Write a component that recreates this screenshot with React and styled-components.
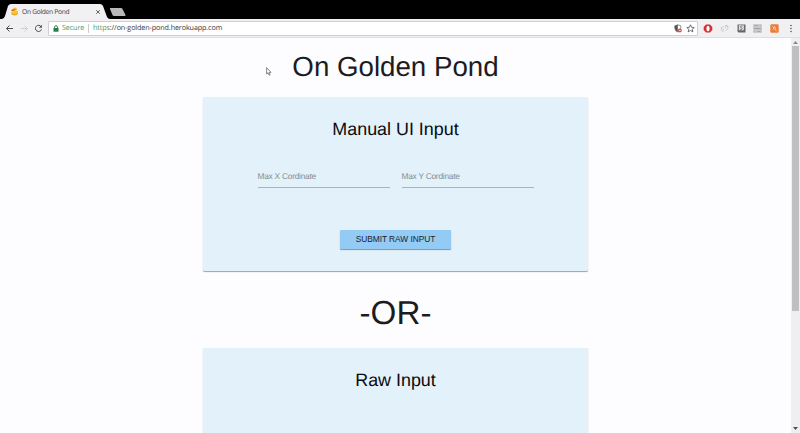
import React from "react";
import styled, { createGlobalStyle } from "styled-components";

const Global = createGlobalStyle`
  * { box-sizing: border-box; }
  body { margin: 0; overflow: hidden; background: #fdfcfe; text-rendering: geometricPrecision; }
  svg { display: block; flex: none; }
`;

const Browser = styled.div`
  width: 800px;
  height: 433px;
  display: flex;
  flex-direction: column;
  overflow: hidden;
  font-family: "Liberation Sans", Arial, sans-serif;
`;

const TabStrip = styled.header`
  position: relative;
  height: 19px;
  flex: none;
  padding-top: 4px;
  background: #000;
`;

const TabShapes = styled.svg`
  position: absolute;
  left: 0;
  top: 0;
`;

const Tab = styled.div`
  position: relative;
  display: flex;
  align-items: center;
  width: 103px;
  height: 15px;
  padding: 0 2px 0 10px;
  font: 6.7px/15px "Open Sans", sans-serif;
  color: #3c3c46;
`;

const TabTitle = styled.span`
  flex: 1;
  margin-left: 3px;
  letter-spacing: -0.3px;
  white-space: nowrap;
`;

const Toolbar = styled.nav`
  display: flex;
  align-items: center;
  height: 19px;
  flex: none;
  padding: 0 6px 0 5px;
  background: #f0eff1;
  border-bottom: 1px solid #dedde0;
`;

const NavIcons = styled.div`
  display: flex;
  width: 43px;
  gap: 5.5px;
`;

const AddressBar = styled.div`
  display: flex;
  align-items: center;
  width: 650px;
  height: 15px;
  padding: 0 2px 0 4px;
  background: #fff;
  border: 1px solid #cfced1;
  border-radius: 1px;
  font: 7.2px/13px "Open Sans", sans-serif;
  letter-spacing: -0.11px;
  white-space: nowrap;
`;

const Secure = styled.span`
  width: 26px;
  margin-left: 3px;
  color: #4b9a68;
`;

const Divider = styled.i`
  width: 1px;
  height: 9px;
  margin-right: 4px;
  background: #cccccf;
`;

const Url = styled.span`
  flex: 1;
  color: #35353a;
`;

const Scheme = styled.span`
  color: #4b9a68;
`;

const AddressActions = styled.div`
  display: flex;
  gap: 4px;
`;

const Extensions = styled.div`
  display: flex;
  align-items: center;
  flex: 1;
  gap: 7.4px;
  padding-left: 5px;
`;

const MenuDots = styled.svg`
  margin-left: auto;
`;

const Viewport = styled.div`
  display: flex;
  flex: 1;
  min-height: 0;
  position: relative;
`;

const Page = styled.main`
  width: 791px;
  height: 395px;
  overflow: hidden;
  display: flex;
  flex-direction: column;
  align-items: center;
  background: #fdfcfe;
  color: #1c1c1e;
`;

const Heading = styled.h1`
  margin: ${(p) => p.$top}px 0 ${(p) => p.$bottom}px;
  height: ${(p) => p.$height}px;
  flex: none;
  font-weight: 400;
  font-size: ${(p) => p.$size}px;
  line-height: ${(p) => p.$height}px;
`;

const Card = styled.section`
  display: flex;
  flex-direction: column;
  align-items: center;
  width: 385px;
  height: 174px;
  flex: none;
  padding-top: 20px;
  background: #e3f1fa;
  border-radius: 1.5px;
  box-shadow: 0 1px 1px rgba(0, 0, 0, 0.36);
`;

const CardTitle = styled.h2`
  margin: 0;
  height: 24px;
  font-weight: 400;
  font-size: 17.9px;
  line-height: 24px;
  color: #0b0b0d;
`;

const Fields = styled.div`
  display: flex;
  gap: 12px;
  margin-top: 28px;
`;

const Field = styled.label`
  width: 132px;
  height: 19px;
  border-bottom: 1px solid #a9b5bd;
  font-size: 8.3px;
  letter-spacing: -0.22px;
  line-height: 14px;
  color: #868e93;
`;

const Submit = styled.button`
  width: 111px;
  height: 19px;
  margin-top: 41.5px;
  padding: 0;
  border: 0;
  border-radius: 1px;
  background: #94cbf5;
  box-shadow: 0 1px 1px rgba(0, 0, 0, 0.4);
  font: 8.4px/18px "Liberation Sans", Arial, sans-serif;
  letter-spacing: -0.06px;
  color: #18232d;
`;

const ScrollTrack = styled.aside`
  display: flex;
  flex-direction: column;
  align-items: center;
  width: 9px;
  padding-top: 3px;
  background: #efeef0;
`;

const ScrollThumb = styled.div`
  width: 7px;
  height: 265px;
  margin: 2px 0 116px;
  background: #bfbec0;
`;

const Pointer = styled.svg`
  position: absolute;
  left: 266px;
  top: 29px;
`;

const Stroke = ({ w = 9, color = "#4d4d50", children }) => (
  <svg width={w} height={w} viewBox="0 0 9 9" fill="none" stroke={color} strokeWidth="1">
    {children}
  </svg>
);

function BrowserTabs() {
  return (
    <TabStrip>
      <TabShapes width="130" height="19">
        <path d="M2 19 Q4 19 5 16 L8 6 Q9 4 11 4 H100 Q102 4 103 6 L107 17 Q108 19 110 19Z" fill="#f1f0f2" />
        <path d="M110 8H121Q122 8 122.500 9L125.500 15Q126 16 124.500 16H114Q113 16 112.500 15L110 9Z" fill="#b9b9b9" />
      </TabShapes>
      <Tab>
        <svg width="9" height="9" viewBox="0 0 9 9">
          <path d="M3.400 1Q6 -.3 7 2Q7 3.500 6 4.300L8 4Q8.500 8.300 4.500 8.300Q1 8.300 1 5L3.600 4Z" fill="#f7c52d" />
          <path d="M1.500 2.800L3.800 2V4H1.500Z" fill="#dc4c2c" />
          <path d="M1.500 7Q5 9.300 7.800 6.500" fill="none" stroke="#d69425" strokeWidth=".7" />
          <circle cx="4.800" cy="2.300" r=".5" fill="#5b4618" />
        </svg>
        <TabTitle>On Golden Pond</TabTitle>
        <svg width="6" height="6" viewBox="0 0 6 6" stroke="#55555a" strokeWidth=".9">
          <path d="M1.200 1.200L4.800 4.800M4.800 1.200L1.200 4.800" />
        </svg>
      </Tab>
    </TabStrip>
  );
}

function BrowserToolbar() {
  return (
    <Toolbar>
      <NavIcons>
        <Stroke><path d="M8 4.500H1.500M4.500 1.500L1.500 4.500L4.500 7.500" /></Stroke>
        <Stroke color="#cfced1"><path d="M1 4.500H7.500M4.500 1.500L7.500 4.500L4.500 7.500" /></Stroke>
        <Stroke>
          <path d="M7.200 2.800A3.100 3.100 0 1 0 7.500 5.300" />
          <path d="M7.900 .8V3.800H4.900Z" fill="#4d4d50" stroke="none" />
        </Stroke>
      </NavIcons>
      <AddressBar>
        <svg width="6" height="7" viewBox="0 0 6 7">
          <rect x=".5" y="3" width="5" height="3.700" fill="#277d48" />
          <path d="M1.600 3V2A1.400 1.400 0 0 1 4.400 2V3" fill="none" stroke="#277d48" strokeWidth=".9" />
        </svg>
        <Secure>Secure</Secure>
        <Divider />
        <Url><Scheme>https</Scheme>://on-golden-pond.herokuapp.com</Url>
        <AddressActions>
          <svg width="8" height="9" viewBox="0 0 8 9">
            <path d="M.8 1.800L3.800 .8L6.800 1.800V4Q6.500 7 3.800 8Q1 7 .8 4Z" fill="#fff" stroke="#666" strokeWidth=".7" />
            <path d="M3.800 .8V8Q1 7 .8 4V1.800Z" fill="#555" />
            <circle cx="5.800" cy="6.500" r="2" fill="#d94645" />
            <path d="M4.800 6.500H6.800" stroke="#fff" strokeWidth=".7" />
          </svg>
          <Stroke>
            <path d="M4.500 .8L5.600 3.300L8.200 3.500L6.200 5.300L6.900 7.900L4.500 6.500L2.100 7.900L2.800 5.300L.8 3.500L3.400 3.300Z" strokeWidth=".8" />
          </Stroke>
        </AddressActions>
      </AddressBar>
      <Extensions>
        <svg width="10" height="9" viewBox="0 0 10 9">
          <path d="M3 .5H7L9.300 3V6L7 8.500H3L.7 6V3Z" fill="#d92e32" />
          <ellipse cx="5" cy="4.500" rx="1.600" ry="2.800" fill="#fff" />
        </svg>
        <Stroke color="#c9c9cb">
          <path d="M3.700 2.500Q1 3 1 5.500Q2 7.500 4 5M5 4Q6 1 8 2Q8.500 5 5.500 7M2 7L3.500 7.500M5 1.500H7" />
        </Stroke>
        <svg width="9" height="9" viewBox="0 0 9 9">
          <path d="M.5 .5H8.500V8.500H1.500L.5 7.500Z" fill="#68686a" />
          <path d="M1.800 1.200H6.800V6.200H1.800Z" fill="#e9e9e9" />
          <path d="M5.700 2Q3 1.700 3 3Q3.200 3.700 4.500 3.700Q5.800 4 5 5.200Q4 5.800 2.700 5.100" fill="none" stroke="#68686a" strokeWidth=".8" />
        </svg>
        <svg width="9" height="9" viewBox="0 0 9 9">
          <rect x=".3" y=".3" width="8.400" height="8.400" fill="#bababc" />
          <path d="M.3 3H8.700M.3 6H8.700M3 .3V8.700M6 .3V8.700" stroke="#dededf" strokeWidth=".6" />
          <path d="M1.500 4.500H7.500M2 1.600H4M5 7.400H7" stroke="#939395" strokeWidth=".7" />
        </svg>
        <svg width="9" height="9" viewBox="0 0 9 9">
          <rect x=".3" y=".3" width="8.400" height="8.400" rx="1.300" fill="#ef7c35" />
          <path d="M2.500 2.500L4 4L3 5.500M4 2L5.500 4L4.700 5L6.500 7" fill="none" stroke="#ffe5ce" strokeWidth=".8" />
        </svg>
        <MenuDots width="6" height="9" viewBox="0 0 6 9" fill="#58585c">
          <circle cx="3" cy="1.500" r=".8" />
          <circle cx="3" cy="4.500" r=".8" />
          <circle cx="3" cy="7.500" r=".8" />
        </MenuDots>
      </Extensions>
    </Toolbar>
  );
}

export default function App() {
  return (
    <>
      <Global />
      <Browser>
        <BrowserTabs />
        <BrowserToolbar />
        <Viewport>
          <Page>
            <Heading $top={11} $bottom={12} $size={27.7} $height={36}>On Golden Pond</Heading>
            <Card>
              <CardTitle>Manual UI Input</CardTitle>
              <Fields>
                <Field>Max X Cordinate</Field>
                <Field>Max Y Cordinate</Field>
              </Fields>
              <Submit>SUBMIT RAW INPUT</Submit>
            </Card>
            <Heading $top={23} $bottom={14} $size={33.2} $height={40}>-OR-</Heading>
            <Card>
              <CardTitle>Raw Input</CardTitle>
            </Card>
          </Page>
          <ScrollTrack>
            <svg width="5" height="3" viewBox="0 0 5 3"><path d="M0 3L2.500 0L5 3Z" fill="#8b8b8d" /></svg>
            <ScrollThumb />
            <svg width="5" height="3" viewBox="0 0 5 3"><path d="M0 0H5L2.500 3Z" fill="#505052" /></svg>
          </ScrollTrack>
          <Pointer width="6" height="9" viewBox="0 0 6 9">
            <path d="M.6 .6V7L2 5.700L3 8.200L4.100 7.700L3.100 5.400H5Z" fill="#fff" stroke="#56565a" strokeWidth=".7" />
          </Pointer>
        </Viewport>
      </Browser>
    </>
  );
}
